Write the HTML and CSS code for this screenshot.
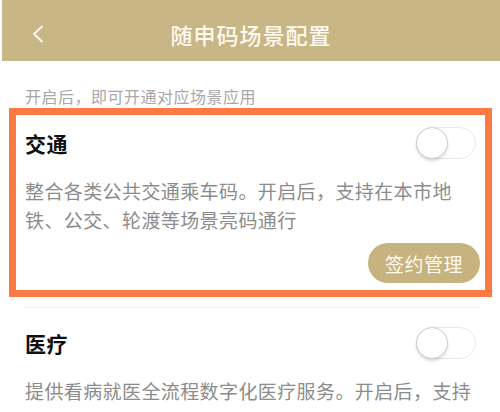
FILE: index.html
```html
<!DOCTYPE html>
<html lang="zh-CN">
<head>
    <meta charset="UTF-8">
    <meta name="viewport" content="width=device-width, initial-scale=1.0">
    <title>随申码场景配置</title>
    <link rel="stylesheet" href="styles.css">
</head>
<body>
    <div class="nav">
        <div class="nav-back">
            <svg width="13" height="18" viewBox="0 0 13 18">
                <polyline points="11,1.5 3,9 11,16.5" fill="none" stroke="#fffaf0" stroke-width="1.8" stroke-linecap="round" stroke-linejoin="round"/>
            </svg>
        </div>
        <div class="nav-title">随申码场景配置</div>
        <div class="nav-side"></div>
    </div>

    <div class="content">
        <p class="hint">开启后，即可开通对应场景应用</p>

        <div class="scene scene-marked">
            <div class="scene-head">
                <span class="scene-name">交通</span>
                <span class="switch"><span class="knob"></span></span>
            </div>
            <p class="scene-desc">整合各类公共交通乘车码。开启后，支持在本市地铁、公交、轮渡等场景亮码通行</p>
            <button class="sign-button">签约管理</button>
        </div>

        <div class="scene scene-next">
            <div class="scene-head">
                <span class="scene-name">医疗</span>
                <span class="switch"><span class="knob"></span></span>
            </div>
            <p class="scene-desc">提供看病就医全流程数字化医疗服务。开启后，支持</p>
        </div>
    </div>
</body>
</html>
```

FILE: styles.css
```css
body {
    font-family: "Noto Sans CJK SC", "Noto Sans", sans-serif;
    background-color: #fff;
    margin: 0;
    padding: 0;
    overflow: hidden;
}

.nav {
    display: grid;
    grid-template-columns: 80px 1fr 80px;
    align-items: center;
    height: 61px;
    box-sizing: border-box;
    padding-top: 6px;
    margin-left: 2px;
    background-color: #c9b686;
}

.nav-back {
    display: flex;
    padding-left: 29px;
}

.nav-title {
    text-align: center;
    color: #fffaf0;
    font-size: 22px;
    font-weight: 500;
    letter-spacing: 1px;
    line-height: 30px;
}

.content {
    padding: 0 20px 0 25px;
}

.hint {
    margin: 24px 0 1px;
    font-size: 16px;
    letter-spacing: 0.5px;
    line-height: 22px;
    color: #a8a8a8;
}

.scene {
    display: flex;
    flex-direction: column;
}

.scene-marked {
    border: 7px solid #fc7b45;
    margin: 0 -12px 0 -16px;
    padding: 12px 5px 7px 9px;
}

.scene-next {
    margin-top: 10px;
    border-top: 1px solid #ececec;
    padding-top: 19px;
}

.scene-head {
    display: flex;
    justify-content: space-between;
    align-items: center;
    height: 32px;
}

.scene-name {
    font-size: 21px;
    font-weight: bold;
    letter-spacing: 0.5px;
    color: #111;
}

.switch {
    display: flex;
    width: 60px;
    height: 32px;
    box-sizing: border-box;
    margin-right: 4px;
    border: 1px solid #e8e8e8;
    border-radius: 16px;
    background-color: #fff;
}

.knob {
    width: 32px;
    height: 32px;
    box-sizing: border-box;
    margin: -1px;
    border: 1px solid #cfcfcf;
    border-radius: 50%;
    background-color: #fff;
    box-shadow: 0 2px 3px rgba(0, 0, 0, 0.15);
}

.scene-desc {
    margin: 17px 0 0;
    font-size: 19px;
    letter-spacing: 0.4px;
    line-height: 29px;
    color: #8c8c8c;
}

.sign-button {
    align-self: flex-end;
    width: 112px;
    height: 40px;
    margin-top: 9px;
    border: none;
    border-radius: 20px;
    background-color: #c7b37f;
    color: #fffbf0;
    font-family: inherit;
    font-size: 19px;
    letter-spacing: 0.5px;
    padding: 0;
    cursor: pointer;
}
```
